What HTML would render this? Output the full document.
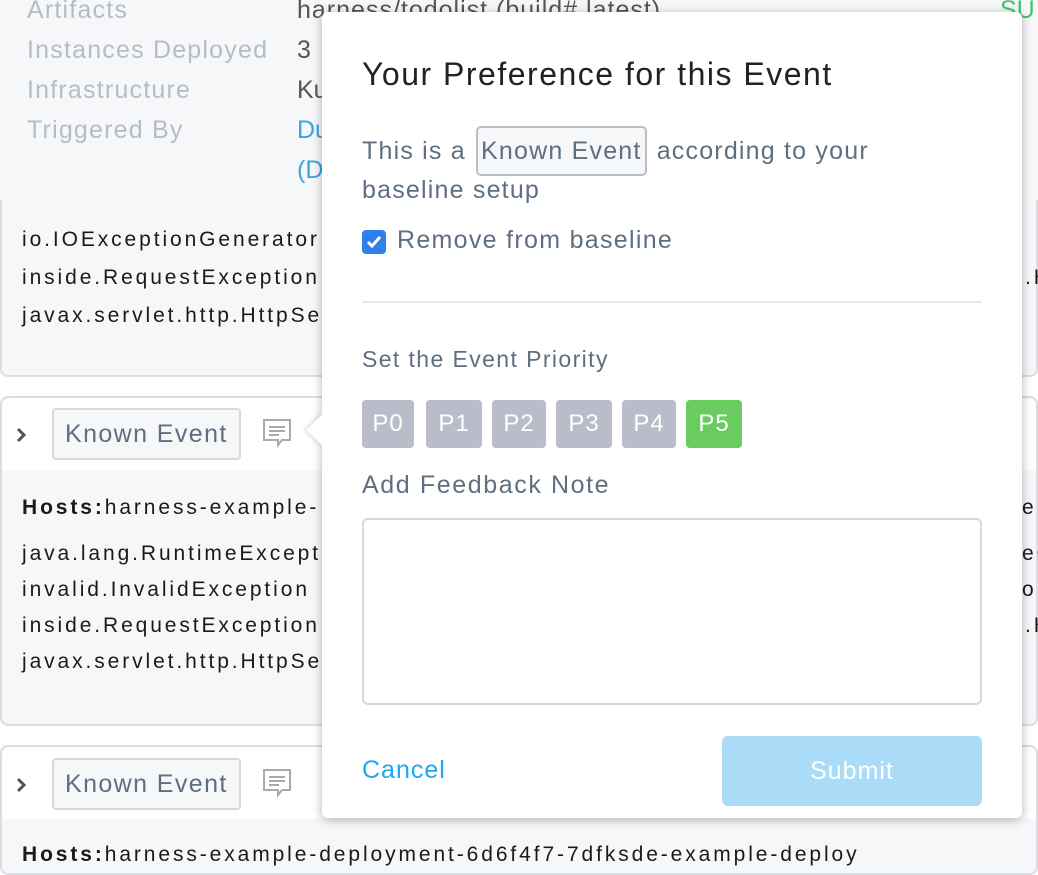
<!DOCTYPE html>
<html><head><style>
*{box-sizing:border-box;margin:0;padding:0}
body{width:1038px;height:852px;overflow:hidden;background:#fff;font-family:"Liberation Sans",sans-serif;position:relative}
.abs{position:absolute}
.lbl{color:#b6bcc6;font-size:25px;letter-spacing:1.2px}
.mono{color:#1a1a1a;font-size:21px;letter-spacing:2.9px;position:absolute;left:22px;white-space:nowrap}
.ke{position:absolute;border:2px solid #d5d9df;border-radius:4px;background:#f6f7f9;color:#5f6e80;font-size:25px;letter-spacing:1.4px;padding:0 11px;height:52px;line-height:48px}
.card{position:absolute;left:0;width:1038px;border:2px solid #dadde2;border-radius:8px;background:#f6f7f9}
.pb{position:absolute;top:400px;height:48px;border-radius:4px;background:#b8bdc9;color:#fff;font-size:24px;line-height:48px;text-align:center;letter-spacing:1px}
.pt{color:#5f6e80;letter-spacing:1.2px}
</style></head><body>
<div class="abs" style="left:0;top:0;width:1038px;height:210px;background:#f6f7f9"></div>
<div class="abs lbl" style="left:27px;top:-4px">Artifacts</div>
<div class="abs lbl" style="left:27px;top:36px">Instances Deployed</div>
<div class="abs lbl" style="left:27px;top:76px">Infrastructure</div>
<div class="abs lbl" style="left:27px;top:116px">Triggered By</div>
<div class="abs" style="left:297px;top:-4px;font-size:25px;color:#555;letter-spacing:1px">harness/todolist (build# latest)</div>
<div class="abs" style="left:297px;top:36px;font-size:25px;color:#555">3</div>
<div class="abs" style="left:297px;top:76px;font-size:25px;color:#555">Ku</div>
<div class="abs" style="left:297px;top:116px;font-size:25px;color:#3aa6e0">Du</div>
<div class="abs" style="left:297px;top:156px;font-size:25px;color:#3aa6e0">(D</div>
<div class="abs" style="left:1000px;top:-4px;font-size:25px;color:#3dc46a">SU</div>

<div class="card" style="top:200px;height:177px;border-top:none;border-radius:0 0 8px 8px"></div>
<div class="mono" style="top:228px">io.IOExceptionGenerator</div>
<div class="mono" style="top:266px">inside.RequestException</div>
<div class="mono" style="top:304px">javax.servlet.http.HttpSe</div>
<div class="mono" style="top:266px;left:1025px">.H</div>

<div class="card" style="top:396px;height:330px"></div>
<div class="abs" style="left:2px;top:398px;width:1034px;height:72px;background:#fff;border-radius:8px 8px 0 0"></div>
<svg class="abs" style="left:14px;top:426px" width="14" height="18" viewBox="0 0 14 18"><path d="M4 3l6 6-6 6" stroke="#555" stroke-width="3" fill="none"/></svg>
<div class="ke" style="left:52px;top:408px">Known Event</div>
<svg class="abs" style="left:262px;top:418px" width="30" height="30" viewBox="0 0 30 30"><path d="M2 2h26v20H20l-4 5v-5H2z" fill="none" stroke="#aaa" stroke-width="2"/><path d="M7 9h16M7 13h16M7 17h10" stroke="#aaa" stroke-width="2"/></svg>
<div class="mono" style="top:496px"><b>Hosts:</b>harness-example-</div>
<div class="mono" style="top:542px">java.lang.RuntimeExcept</div>
<div class="mono" style="top:578px">invalid.InvalidException</div>
<div class="mono" style="top:614px">inside.RequestException</div>
<div class="mono" style="top:650px">javax.servlet.http.HttpSe</div>
<div class="mono" style="top:496px;left:1022px">er</div>
<div class="mono" style="top:542px;left:1022px">eC</div>
<div class="mono" style="top:578px;left:1022px">on</div>
<div class="mono" style="top:614px;left:1025px">.H</div>

<div class="card" style="top:745px;height:130px"></div>
<div class="abs" style="left:2px;top:747px;width:1034px;height:72px;background:#fff;border-radius:8px 8px 0 0"></div>
<svg class="abs" style="left:14px;top:776px" width="14" height="18" viewBox="0 0 14 18"><path d="M4 3l6 6-6 6" stroke="#555" stroke-width="3" fill="none"/></svg>
<div class="ke" style="left:52px;top:758px">Known Event</div>
<svg class="abs" style="left:262px;top:768px" width="30" height="30" viewBox="0 0 30 30"><path d="M2 2h26v20H20l-4 5v-5H2z" fill="none" stroke="#aaa" stroke-width="2"/><path d="M7 9h16M7 13h16M7 17h10" stroke="#aaa" stroke-width="2"/></svg>
<div class="mono" style="top:843px"><b>Hosts:</b>harness-example-deployment-6d6f4f7-7dfksde-example-deploy</div>

<div class="abs" style="left:322px;top:12px;width:700px;height:806px;background:#fff;border-radius:6px;box-shadow:0 2px 10px rgba(0,0,0,.3)"></div>
<div class="abs" style="left:311px;top:419px;width:22px;height:22px;background:#fff;transform:rotate(45deg);box-shadow:-2px 2px 4px rgba(0,0,0,.12)"></div>
<div class="abs" style="left:322px;top:405px;width:20px;height:50px;background:#fff"></div>

<div class="abs" style="left:362px;top:56px;font-size:32px;color:#222;letter-spacing:1.5px">Your Preference for this Event</div>
<div class="abs pt" style="left:362px;top:131px;font-size:25px;line-height:40px;width:600px">This is a <span style="display:inline-block;border:2px solid #b8bec9;border-radius:5px;background:#f6f7f9;padding:0 3px;line-height:46px;height:50px;vertical-align:top;margin:-5px 2px 0">Known Event</span> according to your</div>
<div class="abs pt" style="left:362px;top:176px;font-size:25px">baseline setup</div>
<div class="abs" style="left:362px;top:230px;width:24px;height:24px;border-radius:4px;background:#2f80ed"><svg width="24" height="24"><path d="M6 12l4 4 8-9" stroke="#fff" stroke-width="3" fill="none"/></svg></div>
<div class="abs pt" style="left:397px;top:226px;font-size:25px;letter-spacing:1.3px">Remove from baseline</div>
<div class="abs" style="left:362px;top:301px;width:620px;height:2px;background:#e8e9ec"></div>
<div class="abs pt" style="left:362px;top:346px;font-size:23px;letter-spacing:1.4px">Set the Event Priority</div>
<div class="pb" style="left:362px;width:52px">P0</div>
<div class="pb" style="left:426px;width:56px">P1</div>
<div class="pb" style="left:492px;width:54px">P2</div>
<div class="pb" style="left:556px;width:56px">P3</div>
<div class="pb" style="left:622px;width:54px">P4</div>
<div class="pb" style="left:686px;width:56px;background:#6acc5e">P5</div>
<div class="abs pt" style="left:362px;top:471px;font-size:25px;letter-spacing:1.6px">Add Feedback Note</div>
<div class="abs" style="left:362px;top:518px;width:620px;height:187px;border:2px solid #d5d8dc;border-radius:6px"></div>
<div class="abs" style="left:362px;top:756px;font-size:25px;color:#1ea7f0;letter-spacing:1px">Cancel</div>
<div class="abs" style="left:722px;top:736px;width:260px;height:70px;border-radius:6px;background:#aadcf8;color:#fff;font-size:25px;text-align:center;line-height:70px;letter-spacing:1px">Submit</div>
</body></html>
